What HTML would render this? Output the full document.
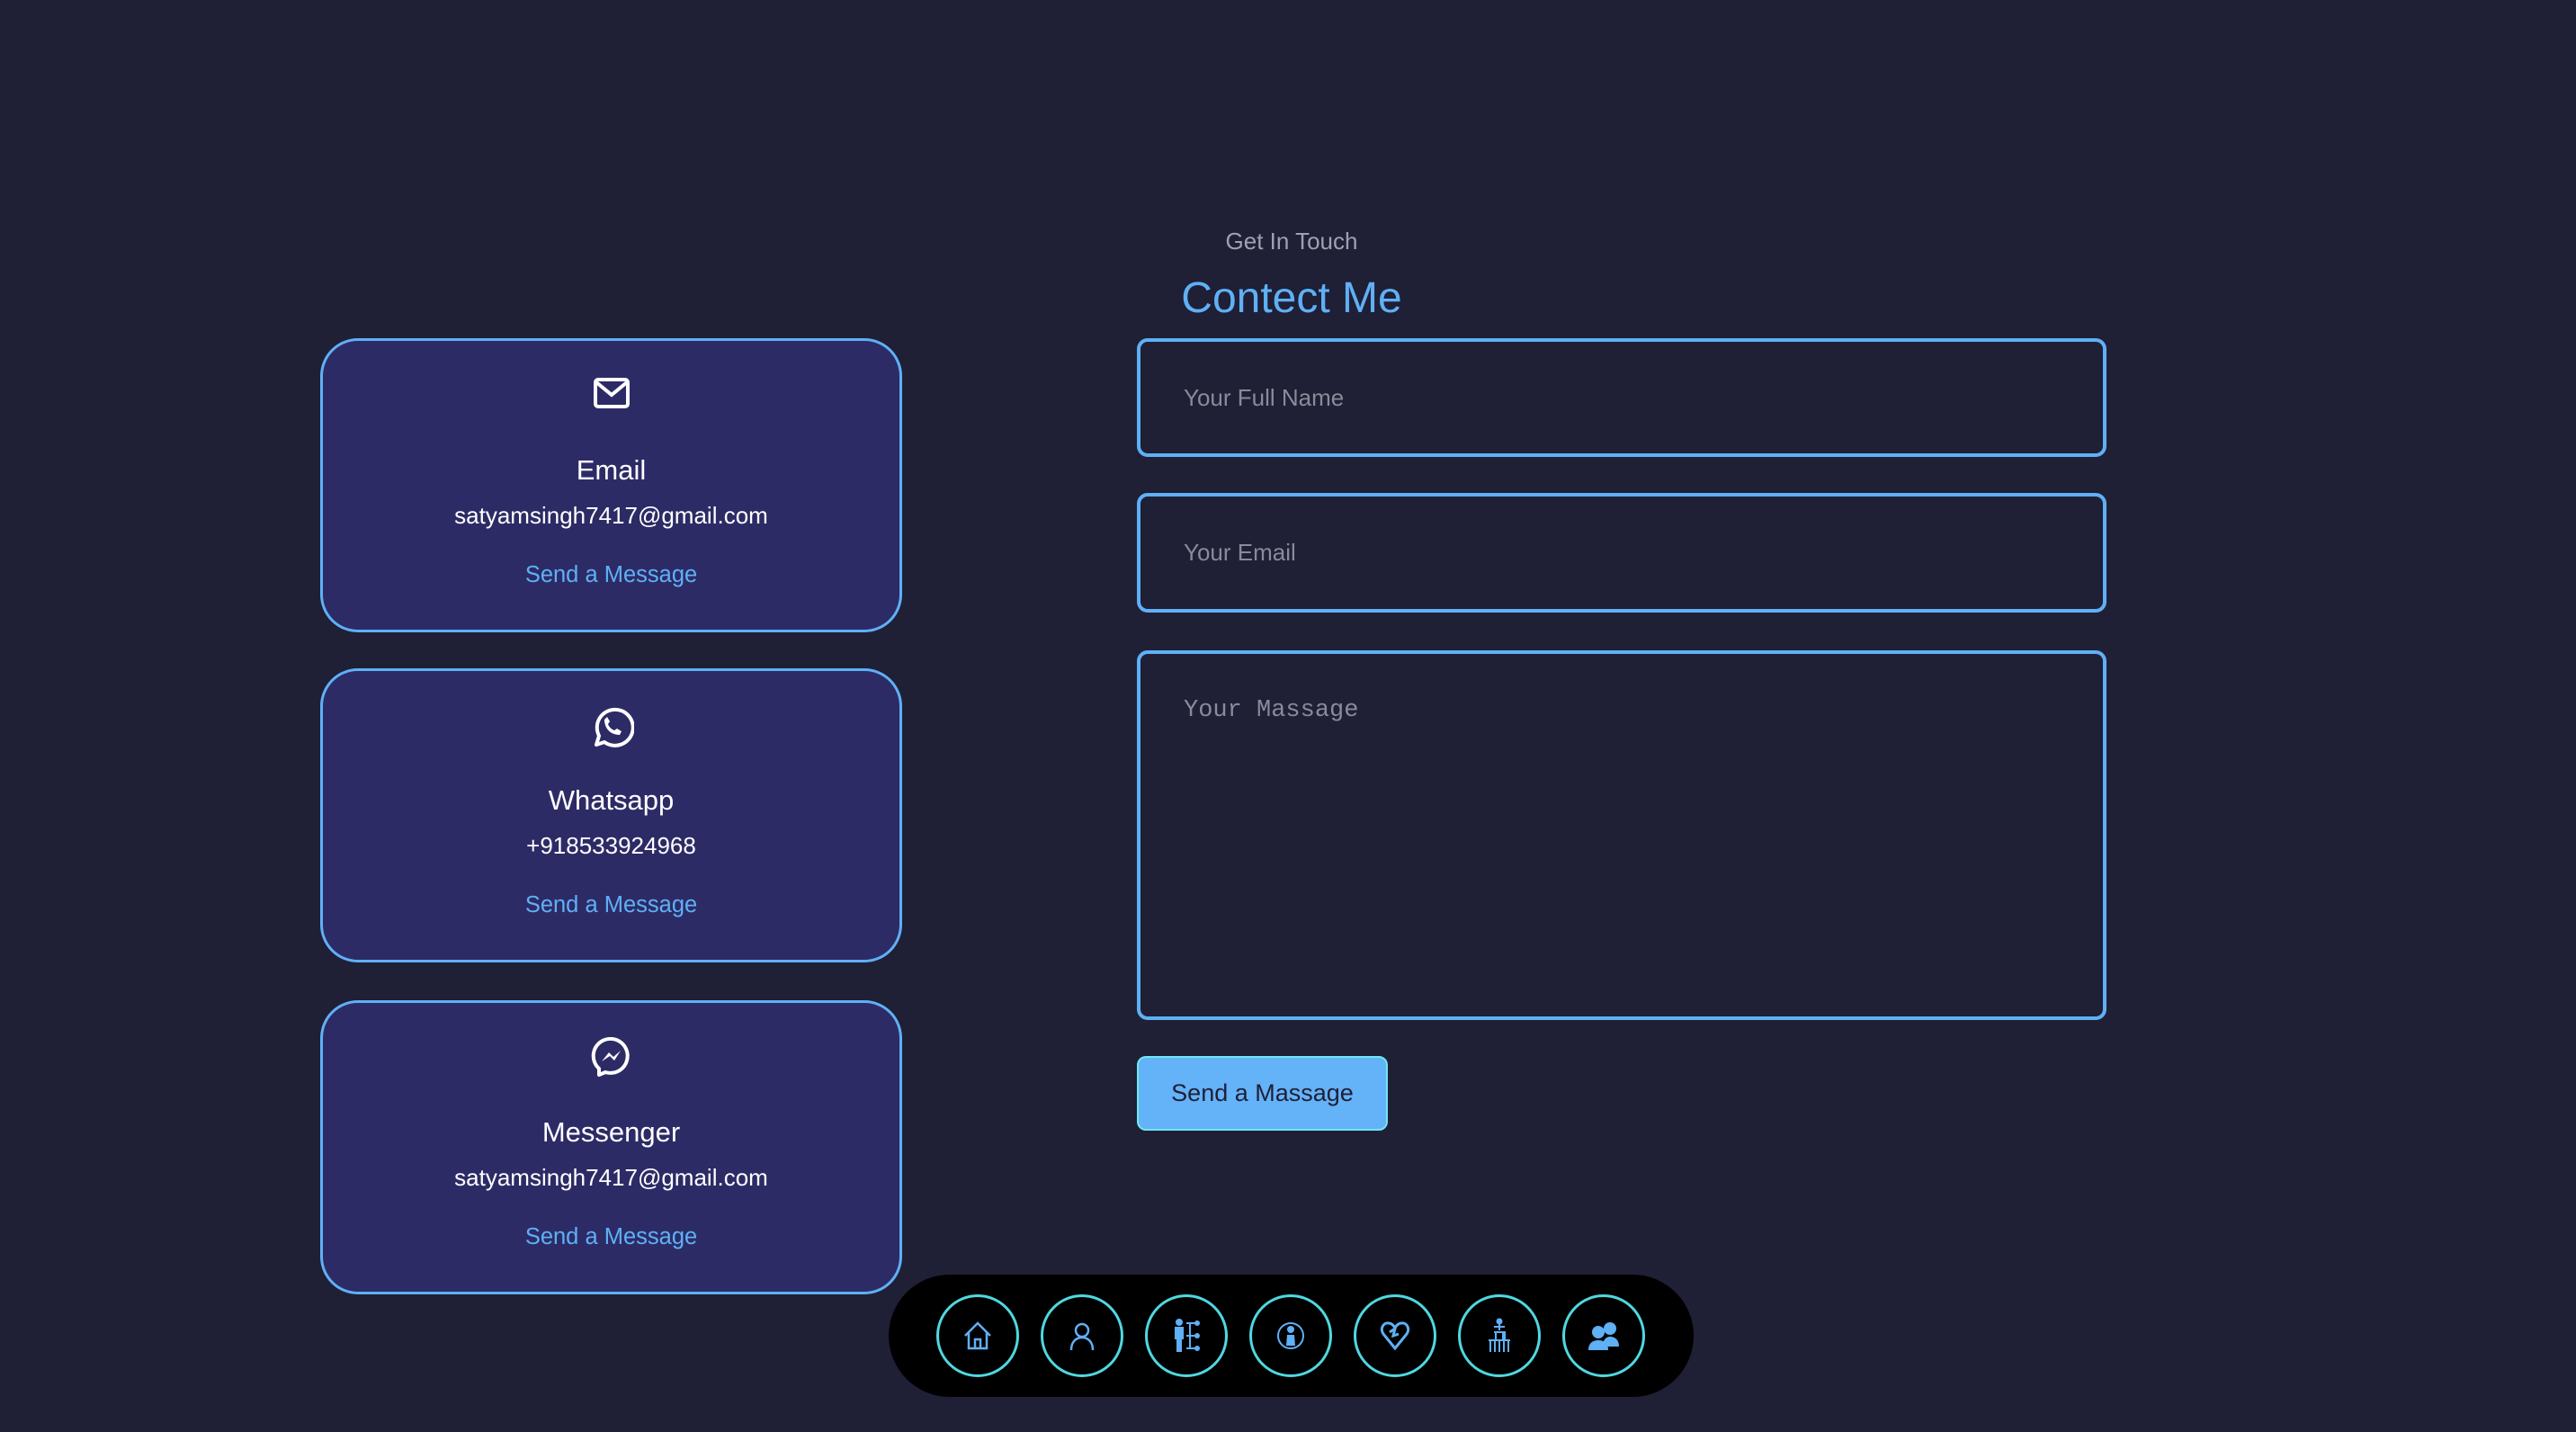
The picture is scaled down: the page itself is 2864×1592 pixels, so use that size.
<!DOCTYPE html>
<html><head><meta charset="utf-8"><style>
*{box-sizing:border-box;margin:0;padding:0}
html,body{width:2864px;height:1592px;background:#1f1f36;overflow:hidden;font-family:"Liberation Sans",sans-serif}
.card{position:absolute;left:356px;width:647px;height:327px;background:#2d2b66;border:3px solid #5fb0f5;border-radius:42px;color:#fff;text-align:center}
.card svg{position:absolute;left:50%;top:40px;transform:translateX(-50%)}
.card .t{position:absolute;left:0;right:0;top:126px;font-size:31px}
.card .v{position:absolute;left:0;right:0;top:179px;font-size:26px}
.card .l{position:absolute;left:0;right:0;top:246px;font-size:25.5px;color:#5fb0f5}
.in{position:absolute;left:1264px;width:1078px;border:4px solid #5fb0f5;border-radius:12px;background:#1f1f36;color:#8a8a99;font-size:26px;padding-left:48px}
.nav{position:absolute;left:988px;top:1417px;width:895px;height:136px;background:#000;border-radius:68px}
.c{position:absolute;top:22px;width:92px;height:92px;border:3px solid #4fd8e0;border-radius:50%;display:flex;align-items:center;justify-content:center}
</style></head><body>

<div class="card" style="top:376px">
<svg width="42" height="36" viewBox="0 0 42 36"><rect x="3" y="3" width="36" height="30" rx="3" fill="none" stroke="#fff" stroke-width="4"/><path d="M4 6 L21 20 L38 6" fill="none" stroke="#fff" stroke-width="4"/></svg>
<div class="t">Email</div><div class="v">satyamsingh7417@gmail.com</div><div class="l">Send a Message</div></div>

<div class="card" style="top:743px">
<svg width="50" height="50" viewBox="0 0 50 50" style="top:38px"><path d="M8 44 L11 34 A20 20 0 1 1 17 41 Z" fill="none" stroke="#fff" stroke-width="4" stroke-linejoin="round"/><path d="M17 16 c0 10 7 17 17 17 l2-4 -5-3 -3 2 c-3-1-6-4-7-7 l2-3 -3-5z" fill="#fff"/></svg>
<div class="t">Whatsapp</div><div class="v">+918533924968</div><div class="l">Send a Message</div></div>

<div class="card" style="top:1112px">
<svg width="46" height="46" viewBox="0 0 46 46" style="top:38px"><path d="M9 42 L9 35 A19 19 0 1 1 16 39 Z" fill="none" stroke="#fff" stroke-width="4" stroke-linejoin="round"/><path d="M12 27 L20 17 L25 22 L33 15 L26 26 L21 21 Z" fill="#fff"/></svg>
<div class="t">Messenger</div><div class="v">satyamsingh7417@gmail.com</div><div class="l">Send a Message</div></div>

<div style="position:absolute;left:1236px;width:400px;top:253px;text-align:center;color:#a0a0b0;font-size:26px">Get In Touch</div>
<div style="position:absolute;left:1236px;width:400px;top:304px;text-align:center;color:#5fb0f5;font-size:48px">Contect Me</div>

<div class="in" style="top:376px;height:132px;line-height:124px">Your Full Name</div>
<div class="in" style="top:548px;height:133px;line-height:125px">Your Email</div>
<div class="in" style="top:723px;height:411px;padding-top:48px;font-family:'Liberation Mono',monospace;font-size:27px">Your Massage</div>

<div style="position:absolute;left:1264px;top:1174px;width:279px;height:83px;background:#64b2f8;border:2px solid #6ee8f0;border-radius:10px;color:#1f1f36;font-size:27px;text-align:center;line-height:79px">Send a Massage</div>

<div class="nav">
<div class="c" style="left:53px"><svg width="36" height="36" viewBox="0 0 36 36" fill="none" stroke="#5fb0f5" stroke-width="2.5"><path d="M4 18 L18 4 L32 18 M8 14 V32 H28 V14 M15 32 V22 H21 V32"/></svg></div>
<div class="c" style="left:169px"><svg width="36" height="36" viewBox="0 0 36 36" fill="none" stroke="#5fb0f5" stroke-width="2.5"><circle cx="18" cy="12" r="7"/><path d="M6 34 C6 24 12 20 18 20 C24 20 30 24 30 34"/></svg></div>
<div class="c" style="left:285px"><svg width="36" height="40" viewBox="0 0 36 40" fill="#5fb0f5"><circle cx="10" cy="5" r="4"/><path d="M5 10 H15 V24 H13 V38 H7 V24 H5 Z"/><path d="M18 6 H28 M18 20 H28 M18 34 H28 M22 6 V34" stroke="#5fb0f5" stroke-width="2"/><circle cx="30" cy="6" r="3"/><circle cx="30" cy="20" r="3"/><circle cx="30" cy="34" r="3"/></svg></div>
<div class="c" style="left:401px"><svg width="36" height="36" viewBox="0 0 36 36"><circle cx="18" cy="18" r="14" fill="none" stroke="#5fb0f5" stroke-width="2"/><circle cx="18" cy="11" r="4" fill="#5fb0f5"/><path d="M13 29 L14 17 H22 L23 29 Z" fill="#5fb0f5"/></svg></div>
<div class="c" style="left:517px"><svg width="36" height="36" viewBox="0 0 36 36" fill="none" stroke="#5fb0f5" stroke-width="3"><path d="M18 32 L5 16 C1 10 5 3 11 4 C14 4 16 6 18 9 C20 6 22 4 25 4 C31 3 35 10 31 16 Z"/><path d="M12 14 L18 10 L16 18 L22 16"/></svg></div>
<div class="c" style="left:633px"><svg width="36" height="40" viewBox="0 0 36 40" fill="none" stroke="#5fb0f5" stroke-width="2"><circle cx="18" cy="4" r="2.5" fill="#5fb0f5"/><path d="M18 7 V14 M12 10 L24 10 M12 16 H24 V24 M14 16 V24 M22 16 V24 M6 25 H30 M8 25 V38 M13 25 V38 M18 25 V38 M23 25 V38 M28 25 V38"/></svg></div>
<div class="c" style="left:749px"><svg width="38" height="36" viewBox="0 0 38 36" fill="#5fb0f5"><circle cx="26" cy="10" r="7"/><path d="M18 30 C18 22 22 19 26 19 C31 19 36 22 36 30 Z"/><circle cx="13" cy="14" r="7"/><path d="M2 34 C2 26 7 23 13 23 C19 23 24 26 24 34 Z"/></svg></div>
</div>
</body></html>
